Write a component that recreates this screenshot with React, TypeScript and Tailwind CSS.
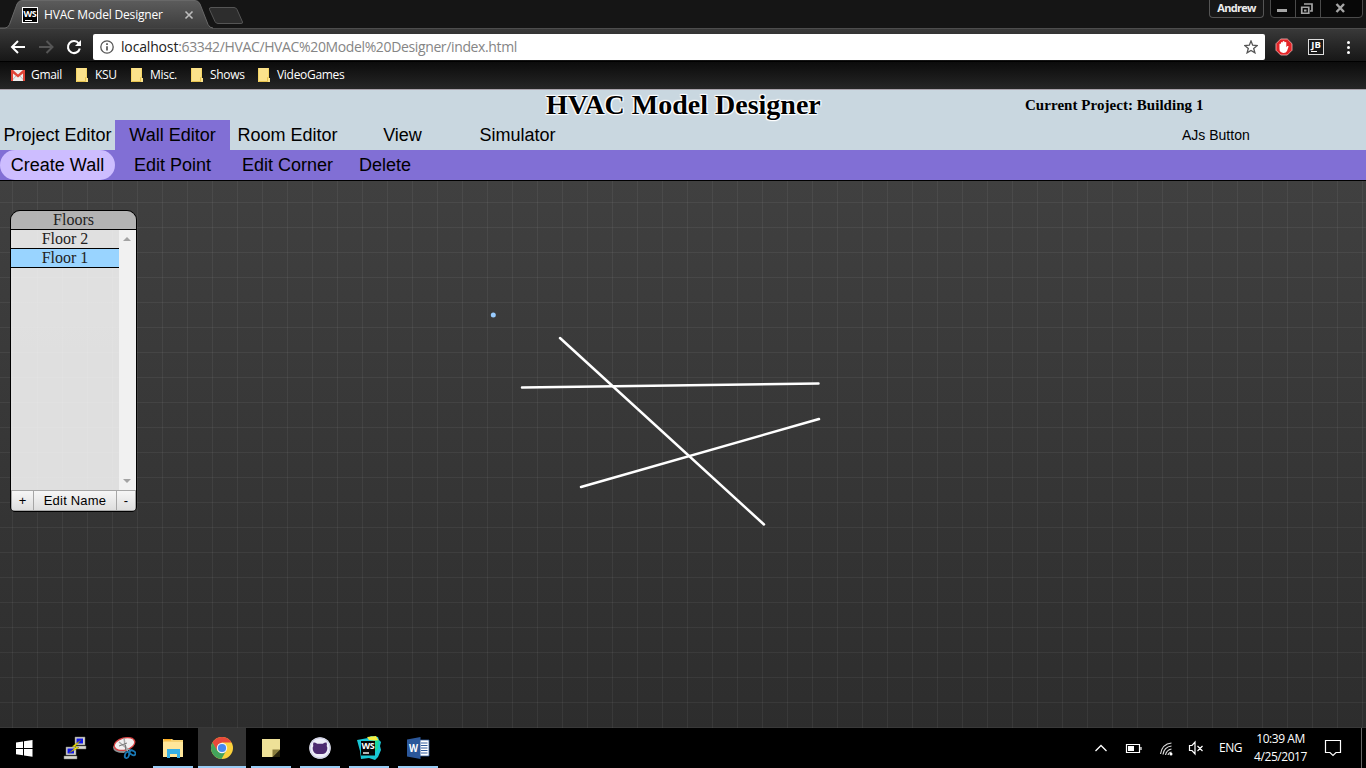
import React from "react";

const UI = "font-['Open_Sans','Noto_Sans',sans-serif]";
const ARIAL = "font-['Liberation_Sans',Arial,sans-serif]";
const SERIF = "font-['Liberation_Serif','Times_New_Roman',serif]";

function TabStrip() {
  return (
    <div className="relative flex h-7 bg-[#151515]">
      <svg className="absolute left-0 top-0" width="250" height="29" viewBox="0 0 250 29">
        <defs>
          <linearGradient id="tab" x1="0" y1="0" x2="0" y2="1">
            <stop offset="0" stopColor="#5c5c5c" />
            <stop offset="1" stopColor="#3d3d3d" />
          </linearGradient>
        </defs>
        <path d="M5 28.5 Q8 28 9.5 24.5 L17 4 Q18.500 .5 22 .5 H195 Q198.500 .5 200 4 L208 24.500 Q209.500 28 213 28.500 Z" fill="url(#tab)" />
        <path d="M0 28 H5 Q8 28 9.500 24.500 L17 4 Q18.500 .5 22 .5 H195 Q198.500 .5 200 4 L208 24.500 Q209.500 28 213 28" fill="none" stroke="#686868" />
        <path d="M211 7.500 H234 Q236 7.500 237 9.500 L242.500 22 Q243 23.500 241 23.500 H218 Q216 23.500 215 21.500 L209.500 9.500 Q209 7.500 211 7.500Z" fill="#2d2d2d" stroke="#555" />
        <path d="M185.500 11.500 L192.500 18.500 M192.500 11.500 L185.500 18.500" stroke="#bdbdbd" strokeWidth="1.600" />
      </svg>
      <div className="relative ml-[22px] mt-[7px] flex h-4 w-4 flex-col items-center border border-white bg-black">
        <span className={`${UI} text-[9px] font-bold leading-[11px] tracking-[-0.3px] text-white`}>WS</span>
        <span className="mt-[1px] h-px w-[7px] self-start ml-[2px] bg-white" />
      </div>
      <span className={`${UI} relative ml-[6px] mt-[6px] whitespace-nowrap text-[12px] leading-[18px] tracking-[-0.18px] text-white`}>HVAC Model Designer</span>
      <div className={`${UI} absolute left-[1209px] top-0 flex h-[18px] w-[55px] items-center justify-center rounded-b border border-t-0 border-[#555] bg-[#171717] text-[11px] font-bold tracking-[-0.7px] text-[#eee]`}>Andrew</div>
      <svg className="absolute left-[1270px] top-0" width="94" height="19" viewBox="0 0 94 19">
        <path d="M.5 0 V14 Q.5 17.500 4 17.500 H89 Q92.500 17.500 92.500 14 V0" fill="#070707" stroke="#4a4a4a" />
        <path d="M25.500 0V17 M50.500 0V17" stroke="#4a4a4a" />
        <rect x="7" y="9" width="10" height="3" fill="#a5a5a5" />
        <path d="M31.750 7.250h7v6h-7z M34 4h8v7h-2" fill="none" stroke="#a5a5a5" strokeWidth="1.700" />
        <rect x="34" y="9.500" width="2.500" height="2" fill="#a5a5a5" />
        <path d="M66.500 4 L74 12 M74 4 L66.500 12" stroke="#a5a5a5" strokeWidth="2.400" />
      </svg>
    </div>
  );
}

function Toolbar() {
  return (
    <div className="flex h-[33px] items-center border-t border-[#4d4d4d] bg-linear-to-b from-[#393939] to-[#171717]">
      <svg className="mt-[4px] shrink-0" width="93" height="26" viewBox="0 0 93 26">
        <path d="M25 13 H12.500 M18 7 L12 13 L18 19" fill="none" stroke="#fff" strokeWidth="2" />
        <path d="M39 13 H52 M46.500 7 L52.500 13 L46.500 19" fill="none" stroke="#555" strokeWidth="2" />
        <path d="M78.800 9.500 A6 6 0 1 0 79.800 14.500" fill="none" stroke="#fff" strokeWidth="2.100" />
        <path d="M81 6 V12 H75 Z" fill="#fff" />
      </svg>
      <div className="mt-[4px] flex h-[26px] w-[1172px] shrink-0 items-center rounded-[2px] bg-white">
        <svg className="ml-[7px] shrink-0" width="14" height="14" viewBox="0 0 14 14">
          <circle cx="7" cy="7" r="6.200" fill="none" stroke="#555" strokeWidth="1.300" />
          <path d="M7 6.200V10.600 M7 3.300V5" stroke="#555" strokeWidth="1.700" />
        </svg>
        <span className={`${UI} ml-[7px] grow whitespace-nowrap text-[14px] leading-[20px] tracking-[-0.365px] text-[#858585]`}>
          <span className="tracking-[-0.16px] text-[#222]">localhost</span>:63342/HVAC/HVAC%20Model%20Designer/index.html
        </span>
        <svg className="mr-[7px] shrink-0" width="14" height="14" viewBox="0 0 14 14">
          <path d="M7 1 L8.700 5.200 L13.200 5.500 L9.700 8.400 L10.900 12.800 L7 10.400 L3.100 12.800 L4.300 8.400 L.8 5.500 L5.300 5.200 Z" fill="none" stroke="#555" strokeWidth="1.300" />
        </svg>
      </div>
      <svg className="ml-[10px] mt-[4px] shrink-0" width="18" height="18" viewBox="0 0 18 18">
        <path d="M5.700 1h6.600L17 5.700v6.600L12.300 17H5.700L1 12.300V5.700z" fill="#e42528" stroke="#f4b8b8" strokeWidth=".8" />
        <path d="M4.500 8V6q.7-.8 1.500 0V4.500q.8-.9 1.700 0V3.500q.9-.9 1.800 0V4.300q.9-.8 1.800 0v5l1-1.300q1.400-.4 1.300.6L12 13q-1 2-3.500 1.900Q4.500 14.700 4.500 11z" fill="#fff" />
      </svg>
      <div className="ml-[15px] mt-[4px] flex h-4 w-4 shrink-0 flex-col items-center border border-[#ddd] bg-[#181818]">
        <span className={`${UI} text-[9.500px] font-bold leading-[10px] text-white`}>JB</span>
        <span className="ml-[2px] mt-[1px] h-px w-[6px] self-start bg-white" />
      </div>
      <div className="ml-[23px] mt-[4px] flex flex-col gap-[2px]">
        <i className="h-[3px] w-[3px] rounded-full bg-white" />
        <i className="h-[3px] w-[3px] rounded-full bg-white" />
        <i className="h-[3px] w-[3px] rounded-full bg-white" />
      </div>
    </div>
  );
}

function Folder() {
  return (
    <svg width="12" height="14" viewBox="0 0 12 14" className="shrink-0">
      <path d="M0 0h11v10h1v4H0z" fill="#fbe28b" />
      <path d="M0 13.500h9.500v-4H11" fill="none" stroke="#e9c34e" />
      <path d="M.5 0V14M10.500 0V10" stroke="#f5d566" />
    </svg>
  );
}

function Bookmark({ label, className }: { label: string; className: string }) {
  return (
    <div className={`flex shrink-0 items-center ${className}`}>
      <Folder />
      <span className="ml-[7px] whitespace-nowrap">{label}</span>
    </div>
  );
}

function Bookmarks() {
  return (
    <div className={`${UI} flex h-[28px] items-center border-t border-black bg-linear-to-b from-[#0c0c0c] to-[#262626] pb-px text-[12px] tracking-[-0.3px] text-white`}>
      <div className="flex w-[65px] shrink-0 items-center pl-[11px]">
        <svg width="14" height="11" viewBox="0 0 14 11" className="shrink-0">
          <path d="M0 0h14v11H0z" fill="#eee" />
          <path d="M1 10.500L5 6M13 10.500L9 6" stroke="#bbb" />
          <path d="M0 0h2l5 4.500L12 0h2v11h-2V3.500L7 7.500 2 3.500V11H0z" fill="#df4437" />
        </svg>
        <span className="ml-[6px]">Gmail</span>
      </div>
      <Bookmark label="KSU" className="ml-[11px] w-[55px]" />
      <Bookmark label="Misc." className="w-[60px]" />
      <Bookmark label="Shows" className="w-[67px]" />
      <Bookmark label="VideoGames" className="w-[90px]" />
    </div>
  );
}

const item = "flex h-[30px] w-[115px] items-center justify-center whitespace-nowrap";

function Header() {
  return (
    <header className="flex h-[92px] flex-col border-b border-black border-t border-t-[#a9a3ab] bg-[#c9d7e0] text-black">
      <div className="flex h-[30px]">
        <h1 className={`${SERIF} w-[1025px] pl-[546px] text-[28px] font-bold leading-[30px] whitespace-nowrap [text-shadow:-1px_-1px_1px_#fff,1px_-1px_1px_#fff,-1px_1px_1px_#fff,1px_1px_1px_#fff,0_0_2px_#fff]`}>HVAC Model Designer</h1>
        <div className={`${SERIF} whitespace-nowrap text-[15px] font-bold leading-[30px] tracking-[0.04px]`}>Current Project: Building 1</div>
      </div>
      <nav className={`${ARIAL} flex h-[30px] text-[18px]`}>
        <div className={item}>Project Editor</div>
        <div className={`${item} bg-[#816fd5]`}>Wall Editor</div>
        <div className={item}>Room Editor</div>
        <div className={item}>View</div>
        <div className={item}>Simulator</div>
        <div className="ml-auto flex w-[184px] items-center text-[14px]">AJs Button</div>
      </nav>
      <nav className={`${ARIAL} flex h-[30px] bg-[#816fd5] text-[18px]`}>
        <div className={`${item} rounded-full bg-[#cdbdff]`}>Create Wall</div>
        <div className={item}>Edit Point</div>
        <div className={item}>Edit Corner</div>
        <div className="flex w-20 items-center justify-center">Delete</div>
      </nav>
    </header>
  );
}

const btn = "flex items-center justify-center border border-[#a6a6a6] bg-linear-to-b from-[#f6f6f6] to-[#dedede]";

function FloorsPanel() {
  return (
    <div className={`${SERIF} absolute left-[10px] top-[29px] flex h-[302px] w-[127px] flex-col overflow-hidden rounded-t-[10px] rounded-b-[5px] border border-black text-[16px] text-[#222]`}>
      <div className="h-[19px] shrink-0 border-b border-black bg-[#b9b9b9]/95 text-center leading-[18px]">Floors</div>
      <div className="flex grow bg-white/84">
        <div className="w-[108px] text-center">
          <div className="h-[19px] border-b border-black leading-[18px]">Floor 2</div>
          <div className="h-[19px] border-b border-black bg-[#99d4ff] leading-[18px]">Floor 1</div>
        </div>
        <div className="flex w-[17px] flex-col items-center justify-between bg-[#f1f1f1] pb-[7px] pr-px pt-[7px]">
          <svg width="8" height="4"><path d="M4 0L8 4H0z" fill="#a3a3a3" /></svg>
          <svg width="8" height="4"><path d="M0 0h8L4 4z" fill="#a3a3a3" /></svg>
        </div>
      </div>
      <div className={`${ARIAL} flex h-[21px] shrink-0 text-[13px] text-black`}>
        <div className={`${btn} w-[23px]`}>+</div>
        <div className={`${btn} -ml-px w-[84px] tracking-[0.2px]`}>Edit Name</div>
        <div className={`${btn} -ml-px w-[20px]`}>-</div>
      </div>
    </div>
  );
}

function Workspace() {
  return (
    <main className="relative h-[547px] overflow-hidden bg-linear-to-b from-[#404040] to-[#2d2d2d]">
      <svg className="block" width="1366" height="547" viewBox="0 0 1366 547">
        <defs>
          <pattern id="grid" x="12" y="21" width="25" height="25" patternUnits="userSpaceOnUse">
            <path d="M.5 0V25M0 .5H25" stroke="#fff" strokeOpacity=".055" />
          </pattern>
        </defs>
        <rect width="1366" height="547" fill="url(#grid)" />
        <g stroke="#fff" strokeWidth="2.500" strokeLinecap="round">
          <path d="M560 157L764 343.500" />
          <path d="M522 206.500L818.500 202.500" />
          <path d="M581 306L819 238" />
        </g>
        <circle cx="493.300" cy="134" r="2.500" fill="#99ccff" />
      </svg>
      <FloorsPanel />
    </main>
  );
}

function Cell({ children, open, active }: { children: React.ReactNode; open?: boolean; active?: boolean }) {
  return (
    <div className={`flex h-10 w-12 shrink-0 flex-col items-center ${active ? "bg-[#343434]" : ""}`}>
      <div className="flex h-[38px] items-center pt-[2px]">{children}</div>
      {open && <div className={`h-[2px] bg-[#99ccf5] ${active ? "w-12" : "w-10"}`} />}
    </div>
  );
}

function Computer({ x, y }: { x: number; y: number }) {
  return (
    <g transform={`translate(${x} ${y})`}>
      <path d="M1 0h10v8H1z" fill="#d5d5cc" stroke="#777" strokeWidth=".5" />
      <path d="M2.500 1.500h6.500v5H2.500z" fill="#1117e8" />
      <path d="M-1 9h13v3H-1z" fill="#d8d8d0" stroke="#777" strokeWidth=".5" />
    </g>
  );
}

function Taskbar() {
  return (
    <footer className="flex h-10 bg-black text-white">
      <Cell>
        <svg width="17" height="17" viewBox="0 0 17 17"><path d="M0 2.500L7 1.500V8H0zM8 1.300L16.500 0V8H8zM0 9H7v6.300L0 14.300zM8 9h8.500v7.800L8 15.600z" fill="#fff" /></svg>
      </Cell>
      <div className="ml-[3px] flex gap-px">
        <Cell>
          <svg width="24" height="24" viewBox="0 0 24 24">
            <Computer x={11} y={1} /><Computer x={2} y={11} />
            <path d="M18 4L9 10.500l4 .5-7 6 10-5.500-4-1z" fill="#fff200" stroke="#655d00" strokeWidth=".4" />
          </svg>
        </Cell>
        <Cell>
          <svg width="24" height="24" viewBox="0 0 24 24">
            <path d="M1 11q0 6 11 6l8-7-15-4z" fill="#8c9295" />
            <ellipse cx="12.500" cy="8" rx="10.500" ry="6" transform="rotate(-15 12.500 8)" fill="#f1f0f0" stroke="#d84343" strokeWidth="1.300" />
            <path d="M12 2l1 7 3 7M7 6l6 5 6 4" fill="none" stroke="#a9a9a9" strokeWidth="1.500" />
            <path d="M13.500 9v5M7 10l8-3" stroke="#777" />
            <ellipse cx="15" cy="19" rx="2" ry="3.200" transform="rotate(20 15 19)" fill="none" stroke="#1978b5" strokeWidth="1.800" />
            <ellipse cx="20.500" cy="16.800" rx="2" ry="3.200" transform="rotate(-60 20.500 16.800)" fill="none" stroke="#1978b5" strokeWidth="1.800" />
          </svg>
        </Cell>
        <Cell open>
          <svg width="22" height="20" viewBox="0 0 22 20">
            <path d="M1 1h9l1.500 1H21v17H1z" fill="#f6d273" /><path d="M2 1h7v1.500H2z" fill="#ffad22" />
            <path d="M1 4h20v15H1z" fill="#ffe69a" />
            <path d="M5 11h13v9h-3v-4H8v4H5z" fill="#37afe5" />
          </svg>
        </Cell>
        <Cell open active>
          <svg width="22" height="22" viewBox="0 0 22 22">
            <circle cx="11" cy="11" r="11" fill="#fbd13c" />
            <path d="M1.470 5.500A11 11 0 0 1 20.530 5.500H11L6 14z" fill="#e8493b" />
            <path d="M1.470 5.500A11 11 0 0 0 10.500 22L15.300 13.500 11 16l-4.500-2z" fill="#43a35c" />
            <circle cx="11" cy="11" r="5.200" fill="#f5f5f5" /><circle cx="11" cy="11" r="4.100" fill="#4788ef" />
          </svg>
        </Cell>
        <Cell open>
          <svg width="18" height="18" viewBox="0 0 18 18"><path d="M0 0h18v10.500L10.500 18H0z" fill="#eee198" /><path d="M10.500 10.500H18V11l-7 7h-.5z" fill="#897d3d" /><path d="M11 18h7v-7z" fill="#28240d" /></svg>
        </Cell>
        <Cell open>
          <svg width="22" height="22" viewBox="0 0 22 22">
            <circle cx="11" cy="11" r="10.800" fill="#eeeef8" />
            <circle cx="11" cy="11" r="10" fill="none" stroke="#cccde6" />
            <path d="M4.500 5.500q1.500-.3 3.700 1.200h5.600q2.200-1.500 3.700-1.200.8 1.800.2 3.500 1.100 1.500.4 4-1.200 4-4.600 4h-5q-3.400 0-4.600-4-.7-2.500.4-4-.6-1.700.2-3.500z" fill="#4d2b70" />
          </svg>
        </Cell>
        <Cell open>
          <svg width="24" height="24" viewBox="0 0 24 24">
            <path d="M0 4l11-2 3-2 7 1 1 3 2 2-1 4 1 4-3 7-3 3-6-2-8 1-1-8z" fill="#18c7d6" />
            <path d="M10 1l9-1 3 5-10-1z" fill="#f5f043" /><path d="M17 5l5-1-1 9-3 3z" fill="#19d8a0" />
            <path d="M4 5h14v14.500H4z" fill="#050505" />
            <text x="4.500" y="13" fill="#fff" fontFamily="Open Sans" fontWeight="700" fontSize="9" letterSpacing="-.5">WS</text>
            <path d="M6 17h6" stroke="#fff" strokeWidth="1.400" />
          </svg>
        </Cell>
        <Cell open>
          <svg width="23" height="22" viewBox="0 0 23 22">
            <path d="M12 3h10v16H12z" fill="#fff" stroke="#315b9c" strokeWidth=".8" />
            <path d="M14 6h6.500M14 8.500h6.500M14 11h6.500M14 13.500h6.500M14 16h6.500" stroke="#315b9c" />
            <path d="M0 2.500L13.500 0v22L0 19.500z" fill="#2b579a" />
            <text x="2" y="15" fill="#fff" fontFamily="Open Sans" fontWeight="700" fontSize="10.500" textLength="9" lengthAdjust="spacingAndGlyphs">W</text>
          </svg>
        </Cell>
      </div>
      <div className="ml-auto flex w-[272px] shrink-0">
        <svg width="116" height="40" viewBox="0 0 116 40" className="shrink-0">
          <path d="M1.500 23L7 17.500l5.500 5.500" fill="none" stroke="#fff" strokeWidth="1.300" />
          <path d="M32.500 16.500h13v8h-13zM47 19v3" fill="none" stroke="#fff" strokeWidth="1.200" /><path d="M34 18h6v5h-6z" fill="#fff" />
          <g fill="none" stroke="#ddd" strokeWidth="1.200">
            <path d="M66.500 26Q68 16 77.500 15M69 26.500Q70 19 77.500 18M71.500 27Q72.500 22 77.500 21M74 27q.5-2.500 3.500-3" />
          </g><circle cx="77" cy="26" r="1.500" fill="#fff" />
          <path d="M95.500 17.500h2.500l3-3.500v12l-3-3.500h-2.500zM103.500 18l5 5m0-5l-5 5" fill="none" stroke="#fff" strokeWidth="1.200" />
        </svg>
        <div className={`${UI} mt-[11px] w-[34px] pl-[9px] text-[12px] leading-[18px] tracking-[-0.5px]`}>ENG</div>
        <div className={`${UI} ml-[8px] mt-[2px] flex w-[57px] flex-col items-center whitespace-nowrap text-[12px] leading-[18px] tracking-[-0.45px]`}>
          <span>10:39 AM</span><span>4/25/2017</span>
        </div>
        <svg width="18" height="40" viewBox="0 0 18 40" className="ml-[15px] shrink-0">
          <path d="M1.500 12.500h15v12H12L9 27.500l-3-3H1.500z" fill="none" stroke="#fff" strokeWidth="1.200" />
        </svg>
        <div className="ml-auto mr-[4px] h-10 w-px bg-[#666]" />
      </div>
    </footer>
  );
}

export default function App() {
  return (
    <div className="h-[768px] w-[1366px] overflow-hidden bg-black">
      <TabStrip />
      <Toolbar />
      <Bookmarks />
      <Header />
      <Workspace />
      <Taskbar />
    </div>
  );
}
